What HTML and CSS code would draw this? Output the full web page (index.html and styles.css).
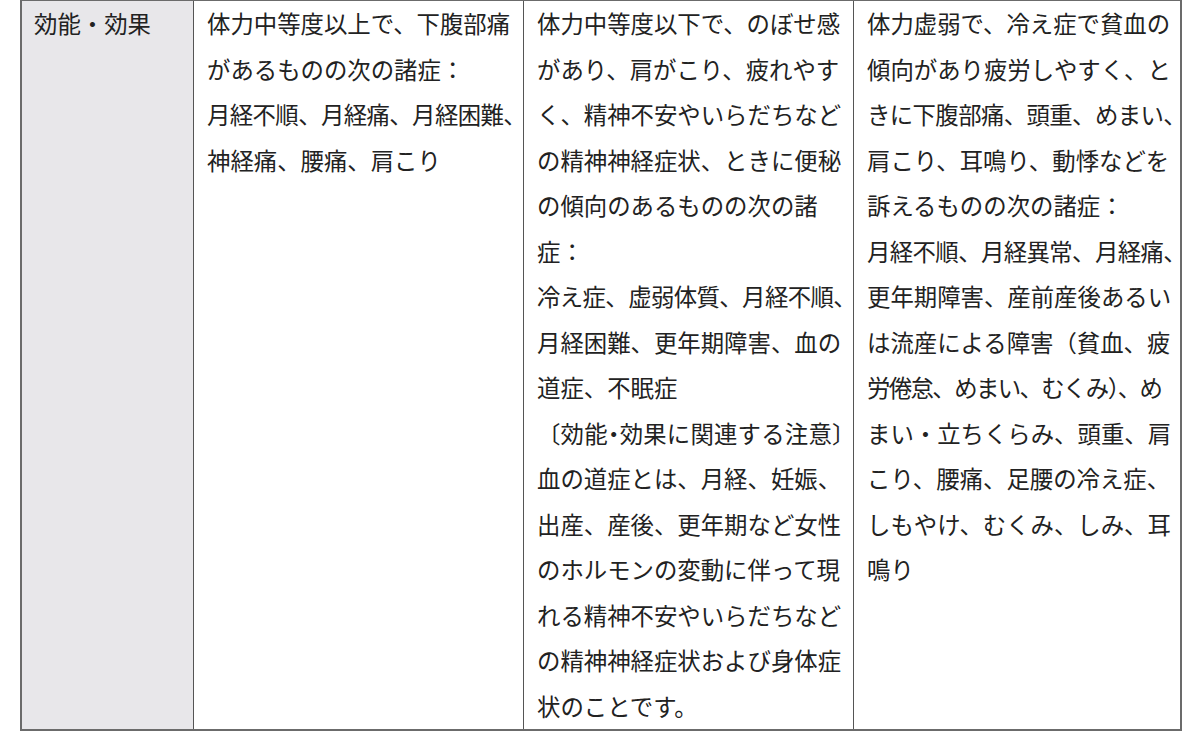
FILE: index.html
```html
<!DOCTYPE html>
<html lang="ja">
<head>
<meta charset="utf-8">
<title>効能・効果</title>
<link rel="stylesheet" href="styles.css">
</head>
<body>
<div class="table">
  <div class="cell head">効能・効果</div>
  <div class="cell">体力中等度以上で、下腹部痛<br>があるものの次の諸症：<br><span class="tight">月経不順、月経痛、月経困難、</span><br>神経痛、腰痛、肩こり</div>
  <div class="cell">体力中等度以下で、のぼせ感<br>があり、肩がこり、疲れやす<br>く、精神不安やいらだちなど<br>の精神神経症状、ときに便秘<br>の傾向のあるものの次の諸<br>症：<br><span class="tight">冷え症、虚弱体質、月経不順、</span><br>月経困難、更年期障害、血の<br>道症、不眠症<br><span class="note">〔効能<span class="half">・</span>効果に関連する注意〕</span><br>血の道症とは、月経、妊娠、<br>出産、産後、更年期など女性<br>のホルモンの変動に伴って現<br>れる精神不安やいらだちなど<br>の精神神経症状および身体症<br>状のことです。</div>
  <div class="cell">体力虚弱で、冷え症で貧血の<br>傾向があり疲労しやすく、と<br><span class="tight">きに下腹部痛、頭重、めまい、</span><br>肩こり、耳鳴り、動悸などを<br>訴えるものの次の諸症：<br><span class="tight">月経不順、月経異常、月経痛、</span><br>更年期障害、産前産後あるい<br>は流産による障害（貧血、疲<br><span class="tighter">労倦怠、めまい、むくみ）、め</span><br>まい・立ちくらみ、頭重、肩<br>こり、腰痛、足腰の冷え症、<br>しもやけ、むくみ、しみ、耳<br>鳴り</div>
</div>
</body>
</html>
```

FILE: styles.css
```css
html, body {
  margin: 0;
  padding: 0;
  background: #ffffff;
}

body {
  font-family: "Noto Sans CJK JP", "Noto Sans", sans-serif;
  color: #222222;
}

.table {
  margin-left: 20px;
  width: 1162px;
  box-sizing: border-box;
  display: grid;
  grid-template-columns: 171px 330px 330px 327px;
  border: 2px solid #6b6b6b;
  border-top: 1px solid #6b6b6b;
}

.cell {
  box-sizing: border-box;
  padding: 0 0 0 13px;
  font-size: 23.4px;
  line-height: 45.5px;
  white-space: nowrap;
  border-left: 1px solid #555555;
}

.cell.head {
  background: #e8e7ea;
  border-left: none;
  padding-left: 12px;
}

.tight {
  letter-spacing: -0.6px;
}

.tighter {
  letter-spacing: -1.6px;
}

.note {
  letter-spacing: 0.2px;
}

.half {
  font-feature-settings: "halt";
}
```
